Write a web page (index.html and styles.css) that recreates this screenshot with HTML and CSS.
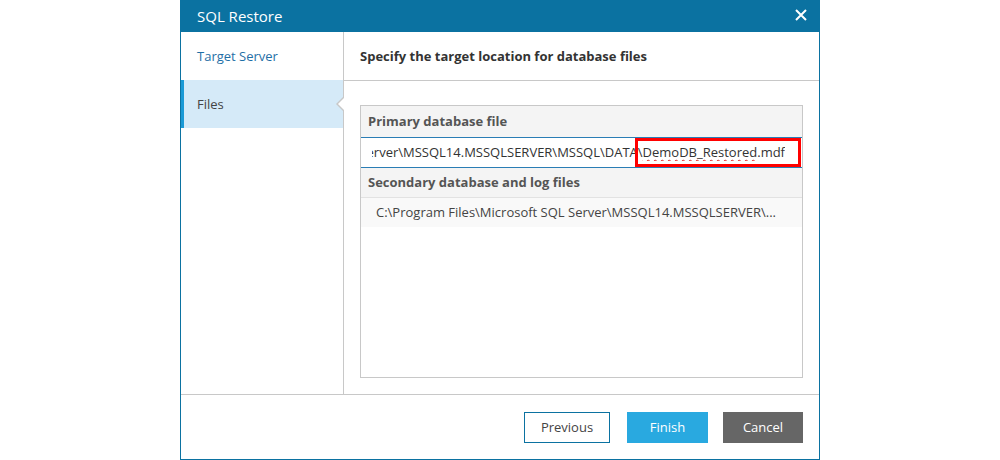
FILE: index.html
```html
<!DOCTYPE html>
<html>
<head>
<meta charset="utf-8">
<link rel="stylesheet" href="styles.css">
</head>
<body>
<div class="dialog">
  <div class="titlebar">
    <span class="title">SQL Restore</span>
    <svg class="close" width="12" height="12" viewBox="0 0 12 12"><path d="M1 1L11 11M11 1L1 11" stroke="#fff" stroke-width="2" fill="none"/></svg>
  </div>
  <div class="body">
    <div class="sidebar">
      <div class="nav-item link">Target Server</div>
      <div class="nav-item active">Files</div>
    </div>
    <div class="content">
      <div class="content-head">Specify the target location for database files</div>
      <div class="content-main">
        <div class="panel">
          <div class="section-head">Primary database file</div>
          <div class="input-row">
            <div class="input-clip"><span class="input-text">C:\Program Files\Microsoft SQL Server\MSSQL14.MSSQLSERVER\MSSQL\DATA\<span class="spell">DemoDB_Restored</span>.mdf</span></div>
            <div class="highlight"></div>
          </div>
          <div class="section-head second">Secondary database and log files</div>
          <div class="file-row">C:\Program Files\Microsoft SQL Server\MSSQL14.MSSQLSERVER\...</div>
        </div>
      </div>
    </div>
  </div>
  <div class="footer">
    <button class="btn btn-prev">Previous</button>
    <button class="btn btn-finish">Finish</button>
    <button class="btn btn-cancel">Cancel</button>
  </div>
</div>
</body>
</html>
```
FILE: styles.css
```css
* { box-sizing: border-box; }
body {
  margin: 0;
  background: #fff;
  font-family: "Open Sans", "Liberation Sans", sans-serif;
  font-size: 13px;
  color: #444;
}
.dialog {
  margin-left: 180px;
  width: 640px;
  height: 460px;
  border: 1px solid #0b72a1;
  border-top: none;
  display: flex;
  flex-direction: column;
}
.titlebar {
  height: 32px;
  margin: 0 -1px;
  background: #0b72a1;
  color: #fff;
  display: flex;
  align-items: center;
  justify-content: space-between;
  padding: 0 13px 0 17px;
}
.title { font-size: 15px; line-height: 20px; margin-bottom: 1px; }
.close { display: block; margin-bottom: 2px; }
.body {
  height: 363px;
  display: flex;
  border-bottom: 1px solid #c8c8c8;
}
.sidebar {
  flex: none;
  width: 163px;
  border-right: 1px solid #c8c8c8;
  display: flex;
  flex-direction: column;
}
.nav-item {
  height: 48px;
  display: flex;
  align-items: center;
  padding-left: 16px;
  position: relative;
  white-space: nowrap;
}
.nav-item.link { color: #1f6fa6; }
.nav-item.active {
  background: #d5eaf8;
  border-left: 3px solid #1b9ad6;
  padding-left: 13px;
  color: #444;
}
.nav-item.active::before {
  content: "";
  position: absolute;
  right: -1px;
  top: 16px;
  border-top: 8px solid transparent;
  border-bottom: 8px solid transparent;
  border-right: 8px solid #c8c8c8;
}
.nav-item.active::after {
  content: "";
  position: absolute;
  right: -2px;
  top: 17px;
  border-top: 7px solid transparent;
  border-bottom: 7px solid transparent;
  border-right: 7px solid #fff;
}
.content {
  flex: 1;
  min-width: 0;
  display: flex;
  flex-direction: column;
}
.content-head {
  height: 49px;
  border-bottom: 1px solid #c8c8c8;
  display: flex;
  align-items: center;
  padding-left: 16px;
  padding-bottom: 1px;
  font-weight: bold;
  color: #333;
}
.content-main {
  flex: 1;
  min-width: 0;
  padding: 24px 16px 16px 16px;
  display: flex;
}
.panel {
  flex: 1;
  min-width: 0;
  border: 1px solid #c8c8c8;
  display: flex;
  flex-direction: column;
}
.section-head {
  height: 31px;
  background: #f4f4f4;
  display: flex;
  align-items: center;
  padding-left: 7px;
  padding-bottom: 2px;
  font-weight: bold;
  color: #555;
}
.section-head.second {
  height: 30px;
  border-bottom: 1px solid #e2e2e2;
}
.input-row {
  height: 31px;
  border-top: 1px solid #2a7db5;
  border-bottom: 1px solid #2a7db5;
  position: relative;
  display: flex;
  align-items: center;
  padding-bottom: 1px;
  background: #fff;
}
.input-clip {
  flex: 1;
  min-width: 0;
  margin: 0 17px 0 11px;
  overflow: hidden;
  display: flex;
  justify-content: flex-end;
  white-space: nowrap;
  color: #333;
}
.input-text { flex: none; }
.spell {
  text-decoration: underline wavy #e02020;
  text-decoration-thickness: 1px;
  text-underline-offset: 2px;
}
.highlight {
  position: absolute;
  right: 1px;
  top: 0;
  bottom: 0;
  width: 166px;
  border: 3px solid #ff0000;
}
.file-row {
  height: 29px;
  background: #f9f9f9;
  display: flex;
  align-items: center;
  padding-left: 15px;
  padding-bottom: 1px;
  color: #444;
  white-space: nowrap;
}
.footer {
  flex: 1;
  display: flex;
  align-items: center;
  justify-content: flex-end;
  padding-right: 16px;
}
.btn {
  height: 31px;
  font-family: "Open Sans", "Liberation Sans", sans-serif;
  font-size: 13px;
  border: 1px solid transparent;
  padding: 0;
  cursor: pointer;
}
.btn-prev {
  width: 86px;
  background: #fff;
  border-color: #0b72a1;
  color: #444;
}
.btn-finish {
  width: 81px;
  margin-left: 17px;
  background: #29a9e0;
  border-color: #29a9e0;
  color: #fff;
}
.btn-cancel {
  width: 80px;
  margin-left: 15px;
  background: #666;
  border-color: #666;
  color: #fff;
}
```
